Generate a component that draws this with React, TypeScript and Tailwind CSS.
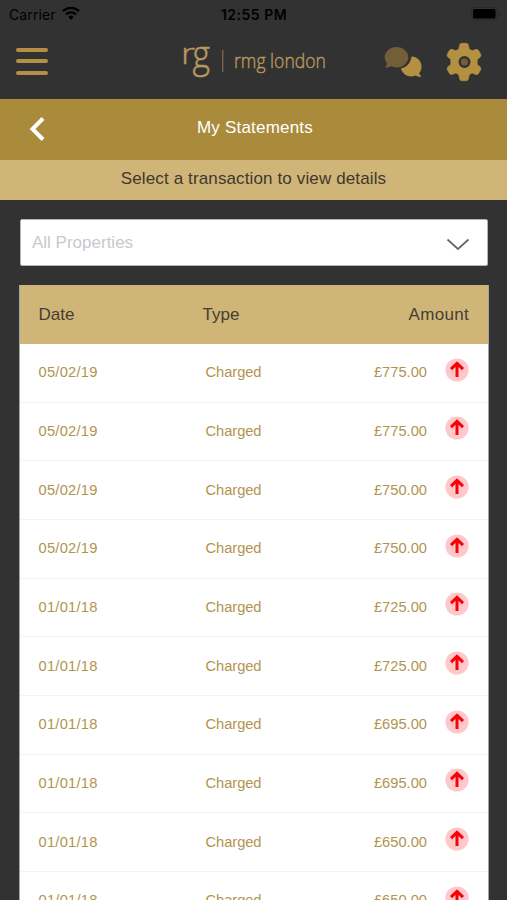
type Transaction = { date: string; type: string; amount: string };

const transactions: Transaction[] = [
  { date: "05/02/19", type: "Charged", amount: "£775.00" },
  { date: "05/02/19", type: "Charged", amount: "£775.00" },
  { date: "05/02/19", type: "Charged", amount: "£750.00" },
  { date: "05/02/19", type: "Charged", amount: "£750.00" },
  { date: "01/01/18", type: "Charged", amount: "£725.00" },
  { date: "01/01/18", type: "Charged", amount: "£725.00" },
  { date: "01/01/18", type: "Charged", amount: "£695.00" },
  { date: "01/01/18", type: "Charged", amount: "£695.00" },
  { date: "01/01/18", type: "Charged", amount: "£650.00" },
  { date: "01/01/18", type: "Charged", amount: "£650.00" },
];

function StatusBar() {
  return (
    <div className="grid h-7 grid-cols-3 items-center pl-[9px] pr-1.5 font-['Inter',sans-serif] text-[14px] text-black">
      <div className="flex items-center gap-[6px]">
        <span className="tracking-[0.1px]">Carrier</span>
        <svg width="18" height="14" viewBox="0 0 18 14" fill="none" stroke="currentColor" strokeWidth="2.4">
          <path d="M1 4.200a11.400 11.400 0 0 1 16 0" />
          <path d="M4 7.400a7.200 7.200 0 0 1 10 0" />
          <path d="M6.300 9.900a3.900 3.900 0 0 1 5.400 0L9 12.700z" fill="currentColor" stroke="none" />
        </svg>
      </div>
      <span className="-translate-x-px text-center font-semibold tracking-[0.5px]">12:55 PM</span>
      <svg className="mb-px justify-self-end" width="30" height="14" viewBox="0 0 30 14">
        <rect x="0.5" y="0.5" width="25.500" height="12.500" rx="3.500" fill="none" stroke="#2a2a2a" />
        <rect x="2" y="2" width="22.500" height="9.500" rx="1.500" />
        <path d="M27.500 4.500v5c2-1 2-4 0-5z" fill="#2a2a2a" />
      </svg>
    </div>
  );
}

function Logo() {
  return (
    <svg width="150" height="62" viewBox="0 0 150 62" fill="#b8995c" stroke="#b8995c" strokeWidth="0.400" className="overflow-visible font-['Open_Sans',sans-serif] font-light">
      <text x="0" y="36" fontSize="30" textLength="14" lengthAdjust="spacingAndGlyphs">r</text>
      <text transform="translate(11.500 40) scale(1 1.270)" fontSize="30" textLength="17.500" lengthAdjust="spacingAndGlyphs">g</text>
      <rect x="41.500" y="22" width="0.700" height="22" stroke="none" />
      <text x="53" y="40" fontSize="20" textLength="92" lengthAdjust="spacingAndGlyphs">rmg london</text>
    </svg>
  );
}

function Header() {
  return (
    <header className="flex h-[71px] items-start">
      <button className="ml-[15.500px] mt-5 flex flex-col gap-[7.400px]">
        <span className="h-1 w-8 rounded-full bg-[#b39045]"></span>
        <span className="h-1 w-8 rounded-full bg-[#b39045]"></span>
        <span className="h-1 w-8 rounded-full bg-[#b39045]"></span>
      </button>
      <div className="ml-[133px] w-[148px]">
        <Logo />
      </div>
      <svg className="ml-[55px] mt-[18px]" width="38" height="32" viewBox="0 0 38 32">
        <path d="M27.500 10.500c5.800 0 10 4.500 10 10.200 0 2.600-.9 4.700-2.300 6.400.3 1.500 1 2.700 2.300 3.700-2.300.3-4.200-.2-5.700-1.200-1.300.6-2.800 1-4.300 1-5.200 0-9.300-3.400-10.600-8 5.600-1.500 9.800-5.400 10.600-12.100z" fill="#b39042" />
        <path d="M12.500 1C19 1 24.300 5.500 24.300 11.200S19 21.400 12.500 21.400c-1.900 0-3.700-.4-5.300-1.100-1.800 1-4 1.500-6.500 1.200 1.600-1.100 2.400-2.500 2.500-4.200C1.600 15.600.8 13.500.8 11.200.8 5.500 6 1 12.500 1z" fill="#725f38" />
      </svg>
      <svg className="ml-[23px] mt-[14px]" width="38" height="40" viewBox="0 0 38 40" fill="#b39042" stroke="#b39042" strokeWidth="0.700">
        <path d="M14.500 3.500Q14.800 1.300 17 1.300h4q2.200 0 2.500 2.200l.6 3.500 3 1.800 3.500-1.200q2-.7 3 1l1.900 3.300q1 1.900-.5 3.300l-2.800 2.300v5l2.800 2.300q1.500 1.400.5 3.300l-1.900 3.300q-1 1.700-3 1L27.100 31l-3 1.800-.6 3.700q-.3 2.200-2.500 2.200h-4q-2.200 0-2.500-2.200l-.6-3.700-3-1.800-3.500 1.300q-2 .7-3-1l-1.900-3.300q-1-1.900.5-3.300l2.800-2.300v-5L3 15.100q-1.500-1.400-.5-3.300l1.900-3.300q1-1.700 3-1l3.500 1.300 3-1.800z" />
        <circle cx="19.500" cy="20" r="4.800" fill="#725f38" stroke="#333233" strokeWidth="2.400" />
      </svg>
    </header>
  );
}

function ArrowBadge() {
  return (
    <svg width="24" height="24" viewBox="0 0 24 24" fill="none">
      <circle cx="12" cy="12" r="11.600" fill="#ffc8ca" />
      <path d="M12 19V5.500M6 11.100L12 5.300l6 5.800" stroke="#fb0007" strokeWidth="3" />
    </svg>
  );
}

function Row({ date, type, amount }: Transaction) {
  return (
    <div className="flex h-[58.670px] shrink-0 items-center border-b border-[#f3f3f3] pl-[18.500px] pr-[19px] text-[14.700px] leading-none text-[#b09550]">
      <span className="w-[167px] -translate-y-[0.500px] tracking-[0.250px]">{date}</span>
      <span className="-translate-y-[0.500px] tracking-[-0.050px]">{type}</span>
      <span className="ml-auto mr-[18px] -translate-y-[0.500px]">{amount}</span>
      <span className="-mt-1.5">
        <ArrowBadge />
      </span>
    </div>
  );
}

export default function App() {
  return (
    <div className="flex h-[900px] w-[507px] flex-col overflow-hidden bg-[#333233] font-['Liberation_Sans',Arial,sans-serif]">
      <StatusBar />
      <Header />

      <div className="grid h-[61px] shrink-0 grid-cols-[1fr_auto_1fr] items-center bg-[#aa8b3c] text-white">
        <svg className="mb-0.5 ml-[29px]" width="18" height="26" viewBox="0 0 18 26" fill="none" stroke="currentColor" strokeWidth="4">
          <path d="M14 2.500L3.500 13 14 23.500" />
        </svg>
        <h1 className="-translate-y-0.5 pl-[3px] text-[17px] tracking-[0.200px]">My Statements</h1>
      </div>
      <div className="flex h-10 shrink-0 items-center justify-center bg-[#cfb578] text-[17px] tracking-[0.130px] text-[#40382e]">
        <p className="-translate-y-px">Select a transaction to view details</p>
      </div>

      <button className="ml-5 mr-[19px] mt-[19px] flex h-[47px] shrink-0 items-center justify-between rounded-xs border border-[#b5b5b5] bg-white pl-[11px] pr-[17px] text-[17px] text-[#c9c9ce]">
        <span className="-translate-y-[0.500px]">All Properties</span>
        <svg className="mt-0.5" width="24" height="14" viewBox="0 0 24 14" fill="none" stroke="#666" strokeWidth="1.700">
          <path d="M1.500 2.500L12 12 22.500 2.500" />
        </svg>
      </button>

      <main className="ml-[19px] mr-[18px] mt-[19px] flex min-h-0 flex-1 flex-col overflow-hidden border-x border-[#a5a5a5] bg-white">
        <div className="flex h-[59px] shrink-0 items-center bg-[#cfb578] pl-[18.500px] pr-[19px] text-[17px] text-[#463e33]">
          <span className="w-[164px] -translate-y-[0.500px]">Date</span>
          <span className="-translate-y-[0.500px]">Type</span>
          <span className="ml-auto -translate-y-[0.500px] tracking-[0.300px]">Amount</span>
        </div>
        {transactions.map((item, index) => (
          <Row key={index} {...item} />
        ))}
      </main>
    </div>
  );
}
